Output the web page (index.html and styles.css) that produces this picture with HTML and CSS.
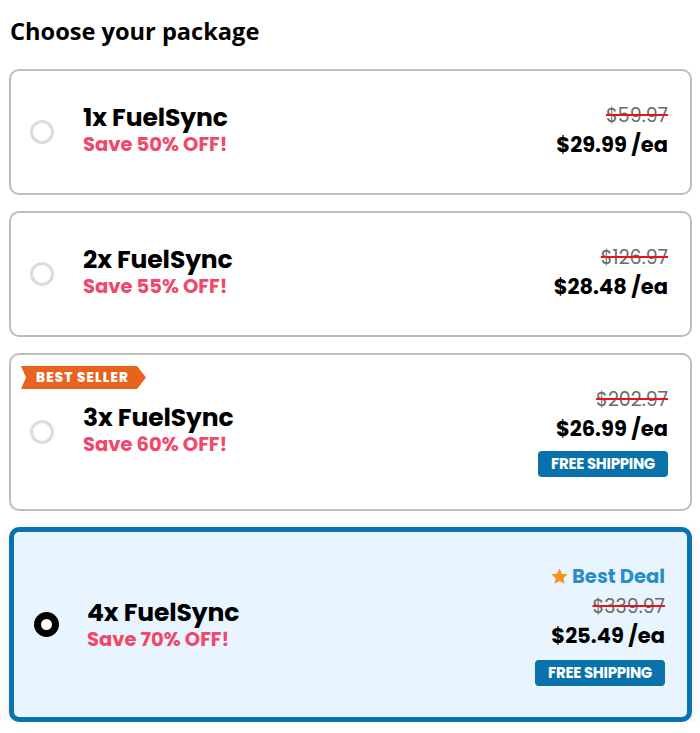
FILE: index.html
```html
<!DOCTYPE html>
<html lang="en">
<head>
<meta charset="utf-8">
<title>Choose your package</title>
<link rel="stylesheet" href="styles.css">
</head>
<body>
<div class="wrap">
  <h2 class="title">Choose your package</h2>
  <div class="list">
    <div class="card">
      <span class="radio"></span>
      <div class="info">
        <div class="name">1x FuelSync</div>
        <div class="save">Save 50% OFF!</div>
      </div>
      <div class="prices">
        <div class="old">$59.97</div>
        <div class="price">$29.99 /ea</div>
      </div>
    </div>
    <div class="card">
      <span class="radio"></span>
      <div class="info">
        <div class="name">2x FuelSync</div>
        <div class="save">Save 55% OFF!</div>
      </div>
      <div class="prices">
        <div class="old">$126.97</div>
        <div class="price">$28.48 /ea</div>
      </div>
    </div>
    <div class="card">
      <span class="ribbon">BEST SELLER</span>
      <span class="radio"></span>
      <div class="info">
        <div class="name">3x FuelSync</div>
        <div class="save">Save 60% OFF!</div>
      </div>
      <div class="prices">
        <div class="old">$202.97</div>
        <div class="price">$26.99 /ea</div>
        <div class="ship">FREE SHIPPING</div>
      </div>
    </div>
    <div class="card selected">
      <span class="radio"></span>
      <div class="info">
        <div class="name">4x FuelSync</div>
        <div class="save">Save 70% OFF!</div>
      </div>
      <div class="prices">
        <div class="deal"><svg class="star" viewBox="0 0 24 24" width="19" height="19"><path d="M12 1.8l3.1 6.6 7.2.8-5.4 4.9 1.5 7.1L12 17.6l-6.4 3.6 1.5-7.1L1.7 9.2l7.2-.8z" fill="#f7931e"/></svg>Best Deal</div>
        <div class="old">$339.97</div>
        <div class="price">$25.49 /ea</div>
        <div class="ship">FREE SHIPPING</div>
      </div>
    </div>
  </div>
</div>
</body>
</html>
```

FILE: styles.css
```css
* { box-sizing: border-box; }
body {
  margin: 0;
  background: #fff;
  font-family: "Poppins", "Inter", "Noto Sans", sans-serif;
  color: #000;
}
.wrap {
  padding: 17px 8px 0 9px;
}
.title {
  margin: 0 0 24px 1px;
  font-family: "Open Sans", "Noto Sans", sans-serif;
  font-weight: 700;
  font-size: 23.6px;
  line-height: 28px;
  color: #000;
}
.list {
  display: flex;
  flex-direction: column;
  gap: 16px;
}
.card {
  position: relative;
  display: flex;
  align-items: center;
  border: 2px solid #bdbdbd;
  border-radius: 10px;
  background: #fff;
  padding: 32px 22px 32px 19px;
  min-height: 126px;
}
.radio {
  flex: none;
  width: 24px;
  height: 24px;
  border: 3px solid #dcdcdc;
  border-radius: 50%;
  background: #fff;
  margin-right: 29px;
}
.info {
  flex: 1;
  margin-bottom: 4px;
}
.name {
  font-weight: 700;
  font-size: 25px;
  line-height: 30px;
  letter-spacing: -0.1px;
}
.save {
  font-weight: 700;
  font-size: 19.5px;
  line-height: 24px;
  color: #f0476b;
}
.prices {
  display: flex;
  flex-direction: column;
  align-items: flex-end;
  text-align: right;
}
.old {
  font-size: 19px;
  line-height: 26px;
  color: #6a6a6a;
  text-decoration: line-through;
  text-decoration-color: #e8141b;
  text-decoration-thickness: 2px;
}
.price {
  font-weight: 700;
  font-size: 21px;
  line-height: 32px;
}
.ship {
  margin-top: 6px;
  background: #0a72aa;
  color: #fff;
  font-weight: 700;
  font-size: 15px;
  line-height: 26px;
  height: 26px;
  padding: 0 13px;
  border-radius: 4px;
  letter-spacing: -0.3px;
}
.ribbon {
  position: absolute;
  left: 10px;
  top: 11px;
  height: 23px;
  line-height: 23px;
  padding: 0 17px 0 15px;
  background: #e8631d;
  color: #fff;
  font-weight: 800;
  font-size: 13.5px;
  letter-spacing: 1.1px;
  clip-path: polygon(0 0, calc(100% - 9px) 0, 100% 50%, calc(100% - 9px) 100%, 0 100%, 5px 50%);
}
.card.selected {
  border: 5px solid #0a73ad;
  background: #e8f5fe;
  padding: 29px 22px 29px 20px;
  min-height: 195px;
  box-shadow: 0 4px 14px rgba(0, 0, 0, 0.08);
}
.card.selected .radio {
  width: 25px;
  height: 25px;
  border: 7px solid #000;
  margin-right: 28px;
}
.card.selected .info {
  margin-bottom: 0;
}
.card.selected .ship {
  margin-top: 8px;
}
.deal {
  display: flex;
  align-items: center;
  gap: 3px;
  font-weight: 700;
  font-size: 19.5px;
  line-height: 26px;
  color: #2a8dc5;
  margin-bottom: 4px;
}
.star {
  display: block;
}
```
